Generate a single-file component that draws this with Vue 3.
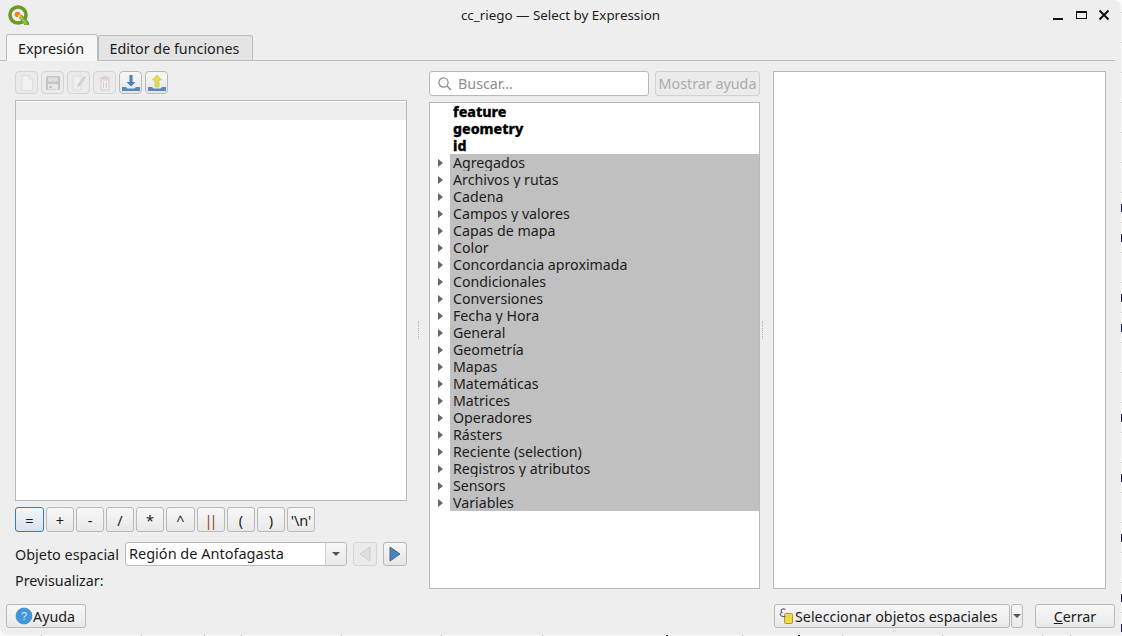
<script setup>
const rows = ['Agregados','Archivos y rutas','Cadena','Campos y valores','Capas de mapa','Color','Concordancia aproximada','Condicionales','Conversiones','Fecha y Hora','General','Geometría','Mapas','Matemáticas','Matrices','Operadores','Rásters','Reciente (selection)','Registros y atributos','Sensors','Variables']
const bold = ['feature','geometry','id']
const ops = ['=','+','-','/','*','^','||','(',')',"'\\n'"]
const sideTicks = Array.from({ length: 21 }, (_, i) => 12 + i * 30)
const sideDark = [204, 234, 294, 324, 414, 474, 534, 594, 624]
const baseTicks = [41, 141, 204, 241, 341, 441, 542, 742, 842, 942, 1042, 1070]
const baseDark = [666, 798]
</script>

<template>
  <div class="desk">
    <div class="win">
      <header class="title">
        <svg class="logo" width="23" height="23" viewBox="0 0 23 23">
          <circle cx="10" cy="10" r="8" fill="none" stroke="#6b9a24" stroke-width="3.6"/>
          <path d="M10 11 L16.5 20 L21 20 L21 17.5 L14 10 Z" fill="#6b9a24"/>
          <path d="M10.5 11 L17 19.5 L20 19.5 L13.5 10.5 Z" fill="#9cc04a"/>
          <circle cx="9.5" cy="9.5" r="2.8" fill="#ee7a2c"/>
          <circle cx="11" cy="11" r="1.4" fill="#f3d34a"/>
        </svg>
        <span class="ttext">cc_riego — Select by Expression</span>
        <div class="wbtns">
          <svg width="62" height="16" viewBox="0 0 62 16">
            <rect x="3" y="11" width="10" height="2" fill="#111"/>
            <rect x="26.5" y="4.5" width="10" height="7" fill="none" stroke="#111" stroke-width="1"/>
            <rect x="26" y="4" width="11" height="2" fill="#111"/>
            <path d="M49.5 3.5 L58.5 12.5 M58.5 3.5 L49.5 12.5" stroke="#111" stroke-width="2"/>
          </svg>
        </div>
      </header>

      <nav class="tabs">
        <div class="tab active">Expresión</div>
        <div class="tab">Editor de funciones</div>
      </nav>

      <main class="pane">
        <section class="left">
          <div class="toolbar">
            <button class="tb off"><svg width="16" height="18" viewBox="0 0 16 18"><path d="M3 1.5 H10 L13.5 5 V16.5 H3 Z" fill="#f2f2f2" stroke="#dcdcdc"/><path d="M10 1.5 V5 H13.5" fill="none" stroke="#dcdcdc"/></svg></button>
            <button class="tb off"><svg width="16" height="16" viewBox="0 0 16 16"><rect x="1" y="1" width="14" height="14" rx="1.5" fill="#c4c4c4"/><rect x="3" y="2.5" width="10" height="4" fill="#dedede"/><rect x="3" y="9" width="10" height="5.5" fill="#e6e6e6"/><rect x="4.5" y="11" width="2" height="2" fill="#b5b5b5"/></svg></button>
            <button class="tb off"><svg width="18" height="18" viewBox="0 0 18 18"><path d="M3 2 H11 V16 H3 Z" fill="#f0f0f0" stroke="#dedede"/><path d="M7 13 L8 10 L14 2 L16 3.5 L10 12 Z" fill="#d0d0d0"/></svg></button>
            <button class="tb off"><svg width="16" height="16" viewBox="0 0 16 16"><rect x="2.5" y="2.5" width="11" height="1.6" fill="#d8cccc"/><rect x="6" y="1" width="4" height="1.5" fill="#d8cccc"/><path d="M4 5 H12 V15 H4 Z" fill="#f2eeee" stroke="#d8cccc"/><path d="M6.5 7 V13 M9.5 7 V13" stroke="#d8cccc"/></svg></button>
            <button class="tb"><svg width="20" height="18" viewBox="0 0 20 18"><path d="M8.5 1 H11.5 V8 H14.5 L10 12.5 L5.5 8 H8.5 Z" fill="#4f7fb5"/><path d="M1 13 H5 L6.5 14.5 H13.5 L15 13 H19 V17 H1 Z" fill="#5d88b5"/></svg></button>
            <button class="tb"><svg width="20" height="18" viewBox="0 0 20 18"><path d="M10 1 L14.5 6 H12 V13 H8 V6 H5.5 Z" fill="#e4de4a" stroke="#b5b13c" stroke-width=".5"/><path d="M1 13 H5 L6.5 14.5 H13.5 L15 13 H19 V17 H1 Z" fill="#5d88b5"/></svg></button>
          </div>
          <div class="editor"><div class="curline"></div></div>
          <div class="ops">
            <button v-for="(o,i) in ops" :key="o" class="op" :class="{ sel: i===0, wide: i===5, pipe: o==='||' }">{{ o }}</button>
          </div>
          <div class="feat">
            <label class="flabel">Objeto espacial</label>
            <div class="combo"><span class="cval">Región de Antofagasta</span><span class="carrow"><i></i></span></div>
            <button class="nav off"><svg width="14" height="18" viewBox="0 0 14 18"><path d="M12 2 V16 L2 9 Z" fill="#dfdfdf" stroke="#cfcfcf"/></svg></button>
            <button class="nav"><svg width="14" height="18" viewBox="0 0 14 18"><path d="M2 2 V16 L12 9 Z" fill="#4f81b8" stroke="#3d6797"/></svg></button>
          </div>
          <div class="prev">Previsualizar:</div>
        </section>

        <div class="split"><i></i></div>

        <section class="mid">
          <div class="searchrow">
            <div class="search">
              <svg width="16" height="16" viewBox="0 0 16 16"><circle cx="6.5" cy="6.5" r="4.6" fill="none" stroke="#8a8a8a" stroke-width="1.2"/><path d="M10 10 L14 14" stroke="#8a8a8a" stroke-width="1.4"/></svg>
              <span>Buscar…</span>
            </div>
            <button class="help">Mostrar ayuda</button>
          </div>
          <div class="tree">
            <div v-for="b in bold" :key="b" class="row"><span class="lbl b">{{ b }}</span></div>
            <div v-for="r in rows" :key="r" class="row"><i class="arrow"></i><span class="lbl g">{{ r }}</span></div>
          </div>
        </section>

        <div class="split small"><i></i></div>

        <section class="right"></section>
      </main>

      <footer class="foot">
        <button class="fbtn ayuda">
          <svg width="18" height="18" viewBox="0 0 18 18"><circle cx="9" cy="9" r="8" fill="#3f97dc" stroke="#2f7fc0" stroke-width=".6"/><text x="9" y="13" text-anchor="middle" font-size="11" fill="#dff0fc" font-family="Liberation Sans, sans-serif">?</text></svg>
          Ayuda
        </button>
        <div class="sp"></div>
        <button class="fbtn sel2">
          <svg width="16" height="18" viewBox="0 0 16 18"><rect x="6.5" y="6.5" width="8" height="10" rx="1" fill="#f1d84b" stroke="#b09a2c"/><path d="M7.5 2.5 C4.5 1 1.5 3 4 5.5 C1 6.5 2 10.5 7.5 9.5" fill="none" stroke="#7d5a8c" stroke-width="1.2"/></svg>
          Seleccionar objetos espaciales
        </button>
        <button class="fbtn drop"><i></i></button>
        <button class="fbtn cerrar"><u>C</u>errar</button>
      </footer>
    </div>
    <i v-for="y in sideTicks" :key="'s'+y" class="mark light side" :style="{ top: y + 'px' }"></i>
    <i v-for="y in sideDark" :key="'d'+y" class="mark dark side" :style="{ top: y + 'px' }"></i>
    <i v-for="x in baseTicks" :key="'b'+x" class="mark light base" :style="{ left: x + 'px' }"></i>
    <i v-for="x in baseDark" :key="'k'+x" class="mark dark base" :style="{ left: x + 'px' }"></i>
  </div>
</template>

<style scoped>
.desk { position: relative; width: 1122px; height: 636px; background: #fbfbfb; overflow: hidden; font-family: "Noto Sans", sans-serif; font-size: 14.3px; color: #1c1c1c; }
.win { width: 1121px; height: 635px; background: #eeeeee; border-radius: 0 8px 0 8px; display: flex; flex-direction: column; }
button { font: inherit; color: inherit; margin: 0; padding: 0; }
.title { height: 34px; display: flex; align-items: center; position: relative; flex: none; padding-bottom: 4px; box-sizing: border-box; }
.logo { position: absolute; left: 8px; top: 5px; }
.ttext { width: 100%; text-align: center; font-size: 13.4px; }
.wbtns { position: absolute; left: 1050px; top: 7px; line-height: 0; }
.tabs { display: flex; height: 27px; padding-left: 6px; flex: none; box-sizing: border-box; margin-right: 6px; border-bottom: 1px solid #bcbcbc; align-items: flex-end; position: relative; }
.tab { height: 25px; box-sizing: border-box; border: 1px solid #bcbcbc; border-bottom: 0; border-radius: 3px 3px 0 0; background: #e4e4e4; line-height: 26px; width: 155px; text-align: center; margin-left: -1px; white-space: nowrap; padding-right: 2px; }
.tab.active { background: #f6f6f6; width: 92px; height: 27px; margin: 0 0 -1px 0; position: relative; line-height: 27px; }
.tab.active + .tab { margin-left: 0; }
.pane { flex: 1; display: flex; padding: 10px 9px 0 15px; min-height: 0; }
.left { width: 392px; display: flex; flex-direction: column; flex: none; }
.toolbar { display: flex; gap: 3px; height: 23px; flex: none; }
.tb { width: 23px; height: 23px; border: 1px solid #b9b9b9; border-radius: 4px; background: linear-gradient(#f7f7f7,#e6e6e6); display: flex; align-items: center; justify-content: center; }
.tb.off { border-color: #d4d4d4; background: #ebebeb; }
.editor { margin-top: 6px; height: 401px; flex: none; background: #fff; border: 1px solid #b9b9b9; box-sizing: border-box; padding-top: 1px; }
.curline { height: 18px; background: #eeeeee; }
.ops { display: flex; gap: 2px; margin-top: 6px; height: 25px; flex: none; }
.op { width: 28px; height: 25px; box-sizing: border-box; border: 1px solid #b9b9b9; border-radius: 3px; background: linear-gradient(#f7f7f7,#e9e9e9); line-height: 22px; font-size: 14.5px; }
.op.sel, .op.wide { width: 29px; }
.op.sel { border-color: #3d7ea8; background: linear-gradient(#f2f6f9,#d8e3ec); }
.op.pipe { color: #8a4a10; letter-spacing: -3px; padding-right: 3px; }
.feat { display: flex; align-items: center; margin-top: 10px; height: 24px; flex: none; }
.flabel { width: 110px; flex: none; font-size: 14.4px; }
.combo { width: 222px; height: 24px; box-sizing: border-box; background: #fff; border: 1px solid #b9b9b9; border-radius: 3px; display: flex; align-items: center; }
.cval { flex: 1; padding: 0 0 2px 3px; font-size: 14.5px; }
.carrow { width: 20px; height: 22px; border-left: 1px solid #cfcfcf; background: linear-gradient(#f7f7f7,#e8e8e8); display: flex; align-items: center; justify-content: center; border-radius: 0 3px 3px 0; }
.carrow i, .drop i { width: 0; height: 0; border: 4px solid transparent; border-top: 4px solid #555; border-bottom: 0; }
.nav { width: 24px; height: 24px; margin-left: 6px; border: 1px solid #b9b9b9; border-radius: 3px; background: linear-gradient(#f7f7f7,#e6e6e6); display: flex; align-items: center; justify-content: center; box-sizing: border-box; }
.nav.off { border-color: #d4d4d4; background: #ebebeb; }
.prev { margin-top: 6px; height: 18px; line-height: 18px; flex: none; }
.split { width: 22px; flex: none; position: relative; }
.split.small { width: 13px; }
.split i { position: absolute; left: 11px; top: 250px; height: 18px; width: 0; border-left: 1px dotted #b5b5b5; }
.split.small i { left: 2px; }
.mid { width: 331px; flex: none; display: flex; flex-direction: column; height: 518px; }
.searchrow { display: flex; gap: 6px; height: 25px; flex: none; }
.search { width: 220px; box-sizing: border-box; background: #fff; border: 1px solid #b9b9b9; border-radius: 3px; display: flex; align-items: center; color: #8e8e8e; padding-left: 7px; gap: 5px; }
.help { width: 105px; border: 1px solid #d0d0d0; border-radius: 3px; background: #ebebeb; color: #ababab; box-sizing: border-box; white-space: nowrap; overflow: hidden; }
.tree { margin-top: 6px; flex: 1; background: #fff; border: 1px solid #b9b9b9; box-sizing: border-box; font-size: 14.2px; }
.row { height: 17px; display: flex; position: relative; line-height: 17px; white-space: nowrap; }
.lbl { margin-left: 20px; padding-left: 3px; flex: 1; }
.lbl.b { font-weight: 800; color: #000; -webkit-text-stroke: 0.3px #000; }
.lbl.g { background: #c0c0c0; }
.arrow { position: absolute; left: 8px; top: 5px; width: 0; height: 0; border: 4px solid transparent; border-left: 5px solid #666; border-right: 0; }
.right { width: 333px; flex: none; height: 518px; background: #fff; border: 1px solid #b9b9b9; box-sizing: border-box; }
.foot { flex: none; height: 46px; box-sizing: border-box; display: flex; align-items: flex-start; padding: 15px 6px 0 6px; }
.fbtn { height: 24px; box-sizing: border-box; border: 1px solid #b9b9b9; border-radius: 3px; background: linear-gradient(#f7f7f7,#e9e9e9); display: flex; align-items: center; }
.ayuda { width: 80px; padding-left: 8px; gap: 0; }
.sp { flex: 1; }
.sel2 { width: 236px; padding-left: 3px; gap: 1px; }
.drop { width: 12px; margin-left: 1px; justify-content: center; }
.cerrar { width: 80px; margin-left: 12px; justify-content: center; }
.mark { position: absolute; display: block; }
.mark.side { left: 1121px; width: 1px; }
.mark.base { top: 635px; width: 1px; height: 1px; }
.mark.side.light { height: 1px; background: #c9c9c9; }
.mark.side.dark { height: 8px; background: #1c1c4a; }
.mark.base.light { background: #b5b5b5; }
.mark.base.dark { width: 2px; background: #222; }
</style>

<style>
html, body { margin: 0; background: #fff; }
</style>
